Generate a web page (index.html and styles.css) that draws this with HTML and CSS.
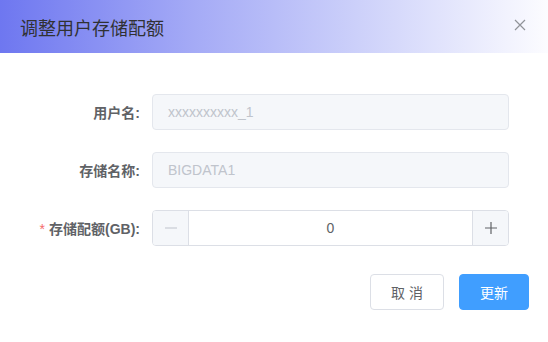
FILE: index.html
```html
<!DOCTYPE html>
<html lang="zh">
<head>
<meta charset="utf-8">
<title>调整用户存储配额</title>
<link rel="stylesheet" href="styles.css">
</head>
<body>
<div class="dialog">
  <div class="header">
    <span class="title">调整用户存储配额</span>
    <svg class="close" width="12" height="12" viewBox="0 0 12 12"><path d="M1 1L11 11M11 1L1 11" stroke="#909399" stroke-width="1.2" fill="none"/></svg>
  </div>
  <div class="body">
    <div class="row">
      <label class="label">用户名:</label>
      <div class="input disabled">xxxxxxxxxx_1</div>
    </div>
    <div class="row">
      <label class="label">存储名称:</label>
      <div class="input disabled">BIGDATA1</div>
    </div>
    <div class="row">
      <label class="label"><span class="req">*</span>存储配额(GB):</label>
      <div class="stepper">
        <span class="btn minus"><svg width="12" height="12" viewBox="0 0 12 12"><path d="M0 6H12" stroke="#c0c4cc" stroke-width="1.2"/></svg></span>
        <span class="value">0</span>
        <span class="btn plus"><svg width="12" height="12" viewBox="0 0 12 12"><path d="M0 6H12M6 0V12" stroke="#606266" stroke-width="1.2"/></svg></span>
      </div>
    </div>
  </div>
  <div class="footer">
    <button class="button cancel">取 消</button>
    <button class="button primary">更新</button>
  </div>
</div>
</body>
</html>
```
FILE: styles.css
```css
* { box-sizing: border-box; }
html, body { margin: 0; padding: 0; background: #fff; }
body {
  font-family: "Liberation Sans", "Noto Sans CJK SC", sans-serif;
  width: 548px;
  height: 342px;
  overflow: hidden;
}
.dialog { width: 548px; height: 342px; background: #fff; }
.header {
  height: 53px;
  display: flex;
  align-items: center;
  justify-content: space-between;
  padding: 0 22px 0 20px;
  background: linear-gradient(90deg, #6e77f0 0%, #a4aaf6 35%, #ccd0fa 65%, #fcfcff 100%);
}
.title {
  font-size: 18px;
  color: #303133;
  line-height: 24px;
  padding-top: 4px;
}
.close { display: block; margin-top: -3px; }
.body {
  padding: 41px 39px 0 20px;
}
.row {
  display: flex;
  align-items: center;
  height: 36px;
  margin-bottom: 22px;
}
.label {
  width: 132px;
  padding-right: 12px;
  text-align: right;
  font-size: 14px;
  font-weight: 700;
  color: #606266;
}
.req { color: #f56c6c; margin-right: 4px; font-weight: 400; }
.input {
  flex: 1;
  height: 36px;
  border: 1px solid #e4e7ed;
  border-radius: 4px;
  padding: 0 15px;
  font-size: 14px;
  line-height: 34px;
}
.input.disabled { background: #f5f7fa; color: #c0c4cc; }
.stepper {
  flex: 1;
  height: 36px;
  display: flex;
  border: 1px solid #dcdfe6;
  border-radius: 4px;
  overflow: hidden;
}
.btn {
  width: 36px;
  background: #f5f7fa;
  display: flex;
  align-items: center;
  justify-content: center;
}
.minus { border-right: 1px solid #dcdfe6; }
.plus { border-left: 1px solid #dcdfe6; }
.value {
  flex: 1;
  text-align: center;
  font-size: 14px;
  color: #606266;
  line-height: 34px;
}
.footer {
  display: flex;
  justify-content: flex-end;
  gap: 15px;
  padding: 6px 19px 0 0;
}
.button {
  height: 36px;
  border-radius: 4px;
  font-family: inherit;
  font-size: 14px;
  padding: 0;
  cursor: pointer;
}
.cancel { width: 74px; border: 1px solid #dcdfe6; background: #fff; color: #606266; }
.primary { width: 70px; border: 1px solid #409eff; background: #409eff; color: #fff; }
```
